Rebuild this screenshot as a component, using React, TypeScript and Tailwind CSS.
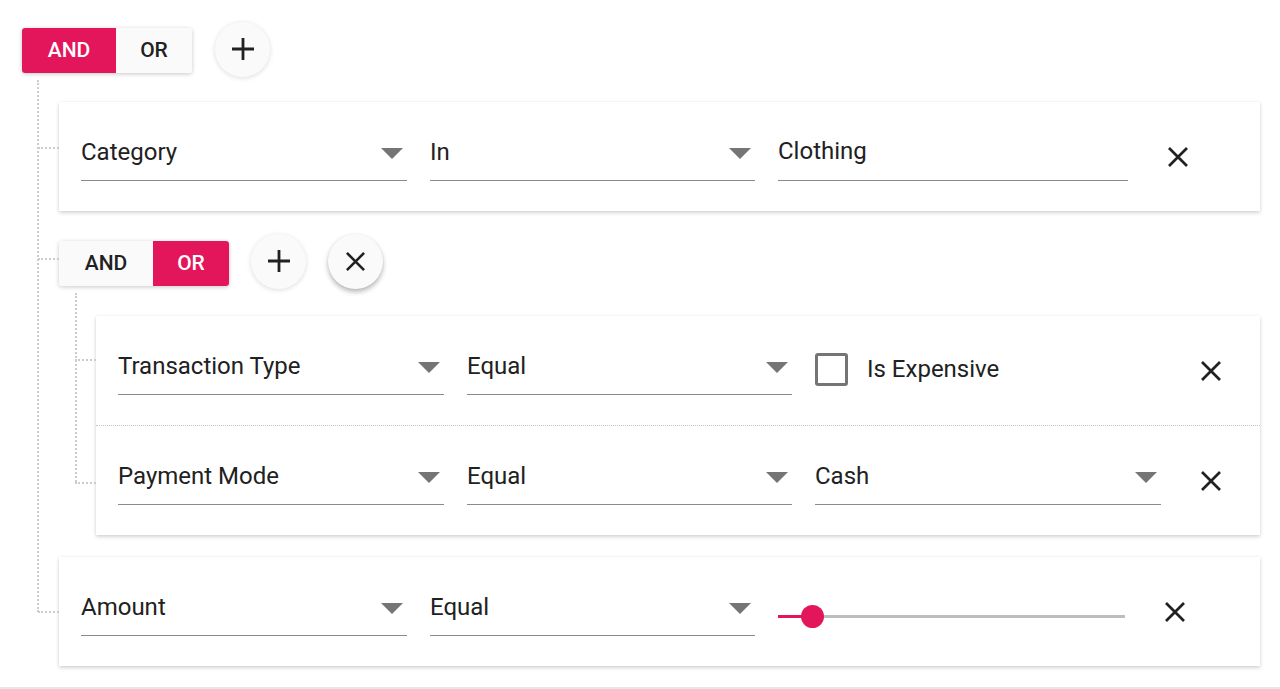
import React from 'react';

const PINK = 'bg-[#e3165b]';

const DropArrow = () => (
  <svg width="22" height="11" viewBox="0 0 22 11" className="shrink-0 mr-[4px]">
    <polygon points="0,0 22,0 11,11" fill="#757575" />
  </svg>
);

const CloseIcon = ({ size = 22 }: { size?: number }) => (
  <svg width={size} height={size} viewBox="0 0 22 22">
    <path d="M2 2 L20 20 M20 2 L2 20" stroke="#212121" strokeWidth="2.7" fill="none" />
  </svg>
);

const PlusIcon = () => (
  <svg width="22" height="22" viewBox="0 0 22 22">
    <path d="M11 0 V22 M0 11 H22" stroke="#212121" strokeWidth="2.8" fill="none" />
  </svg>
);

const Select = ({ value, width }: { value: string; width: string }) => (
  <div className={`flex items-center h-[55px] border-b-[1.5px] border-[#8a8a8a] ${width}`}>
    <span className="flex-1 pb-[2px] text-[24px] text-[#212121] leading-none">{value}</span>
    <DropArrow />
  </div>
);

const TextBox = ({ value, width }: { value: string; width: string }) => (
  <div className={`flex items-center h-[55px] pb-[4px] border-b-[1.5px] border-[#8a8a8a] ${width}`}>
    <span className="text-[24px] text-[#212121] leading-none">{value}</span>
  </div>
);

const Remove = () => (
  <button className="ml-[39px] mt-[20px] w-[22px] h-[22px] flex items-center justify-center shrink-0">
    <CloseIcon />
  </button>
);

const Connector = ({ top }: { top: string }) => (
  <div className={`absolute left-[-21px] w-[21px] border-t-2 border-dotted border-[#cccccc] ${top}`} />
);

const Toggle = ({ active }: { active: 'AND' | 'OR' }) => (
  <div className="flex rounded-[3px] overflow-hidden h-[45px] shadow-[0_1px_4px_rgba(0,0,0,0.22)] text-[21px] font-medium">
    <div
      className={`w-[94px] flex items-center justify-center ${active === 'AND' ? `${PINK} text-white` : 'bg-[#fafafa] text-[#212121]'}`}
    >
      AND
    </div>
    <div
      className={`w-[76px] flex items-center justify-center ${active === 'OR' ? `${PINK} text-white` : 'bg-[#fafafa] text-[#212121]'}`}
    >
      OR
    </div>
  </div>
);

const Circle = ({ children, strong }: { children: React.ReactNode; strong?: boolean }) => (
  <button
    className={`w-[55px] h-[55px] rounded-full bg-[#fafafa] flex items-center justify-center ${
      strong
        ? 'shadow-[0_3px_5px_rgba(0,0,0,0.28),0_0_2px_rgba(0,0,0,0.08)]'
        : 'shadow-[0_1px_5px_rgba(0,0,0,0.14)]'
    }`}
  >
    {children}
  </button>
);

const cardShadow = 'bg-white shadow-[0_2px_4px_rgba(0,0,0,0.16),0_0_3px_rgba(0,0,0,0.06)]';

export default function App() {
  return (
    <div
      className="w-[1280px] h-[689px] bg-white border-b-2 border-[#e6e6e6] pl-[22px] pr-[20px] pt-[21px]"
      style={{ fontFamily: 'Roboto, "Liberation Sans", sans-serif' }}
    >
      {/* top group header */}
      <div className="flex items-center h-[56px] gap-[23px]">
        <div className="mt-[3px]">
          <Toggle active="AND" />
        </div>
        <Circle>
          <PlusIcon />
        </Circle>
      </div>

      <div className="relative pl-[37px] pt-[25px]">
        <div className="absolute left-[15px] top-[3px] bottom-[54px] border-l-2 border-dotted border-[#cccccc]" />

        {/* rule 1 */}
        <div className={`relative flex items-start px-[22px] pt-[24px] pb-[30px] ${cardShadow}`}>
          <Connector top="top-[45px]" />
          <div className="flex gap-[23px]">
            <Select value="Category" width="w-[326px]" />
            <Select value="In" width="w-[325px]" />
            <TextBox value="Clothing" width="w-[350px]" />
          </div>
          <Remove />
        </div>

        {/* nested group */}
        <div className="relative mt-[22px]">
          <div className="relative flex items-center h-[56px]">
            <Connector top="top-[25px]" />
            <div className="mt-[5px] mr-[22px]">
              <Toggle active="OR" />
            </div>
            <Circle>
              <PlusIcon />
            </Circle>
            <div className="ml-[22px]">
              <Circle strong>
                <CloseIcon size={21} />
              </Circle>
            </div>
          </div>

          <div className="relative pl-[37px] pt-[27px]">
            <div className="absolute left-[16px] top-[4px] bottom-[53px] border-l-2 border-dotted border-[#cccccc]" />
            <div className={cardShadow}>
              <div className="relative flex items-start px-[22px] pt-[24px] pb-[30px]">
                <Connector top="top-[43px]" />
                <div className="flex gap-[23px]">
                  <Select value="Transaction Type" width="w-[326px]" />
                  <Select value="Equal" width="w-[325px]" />
                  <div className="w-[346px] h-[55px] flex items-center pt-[3px]">
                    <div className="w-[33px] h-[33px] border-[3px] border-[#757575] rounded-[3px]" />
                    <span className="ml-[19px] text-[24px] text-[#212121] leading-none">Is Expensive</span>
                  </div>
                </div>
                <Remove />
              </div>
              <div className="relative flex items-start px-[22px] pt-[24px] pb-[30px] border-t border-dotted border-[#c4c4c4]">
                <Connector top="top-[56px]" />
                <div className="flex gap-[23px]">
                  <Select value="Payment Mode" width="w-[326px]" />
                  <Select value="Equal" width="w-[325px]" />
                  <Select value="Cash" width="w-[346px]" />
                </div>
                <Remove />
              </div>
            </div>
          </div>
        </div>

        {/* rule amount */}
        <div className={`relative mt-[22px] flex items-start px-[22px] pt-[24px] pb-[30px] ${cardShadow}`}>
          <Connector top="top-[54px]" />
          <div className="flex gap-[23px]">
            <Select value="Amount" width="w-[326px]" />
            <Select value="Equal" width="w-[325px]" />
            <div className="w-[347px] h-[55px] flex items-center pt-[16px]">
              <div className="relative w-full h-[3px] bg-[#bdbdbd]">
                <div className={`absolute left-0 top-0 h-[3px] w-[34px] ${PINK}`} />
                <div className={`absolute left-[23px] top-[-10px] w-[23px] h-[23px] rounded-full ${PINK}`} />
              </div>
            </div>
          </div>
          <Remove />
        </div>
      </div>
    </div>
  );
}
